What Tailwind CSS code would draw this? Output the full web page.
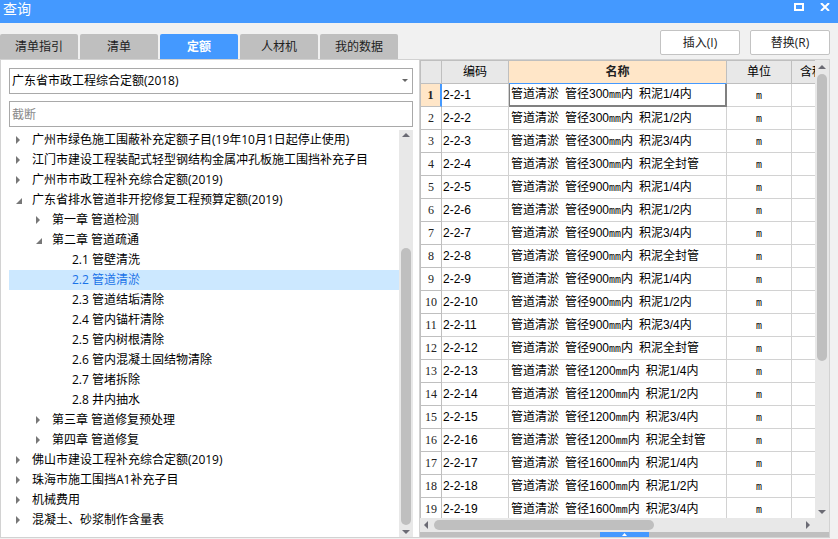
<!DOCTYPE html>
<html lang="zh-CN">
  <head>
    <meta charset="UTF-8" />
    <meta name="viewport" content="width=device-width, initial-scale=1.0" />
    <script src="https://cdn.jsdelivr.net/npm/@tailwindcss/browser@4"></script>
    <title>查询</title>
  </head>
  <body class="bg-[#f1f1f1] font-['Open_Sans','Noto_Sans_CJK_SC',sans-serif] text-xs text-black">
    <div class="flex h-screen flex-col overflow-hidden">
      <!-- Title bar -->
      <header class="flex h-[23px] shrink-0 items-start justify-between bg-[#4499ff] pl-[3px] pr-2 text-white">
        <h1 class="text-sm leading-[18px]">查询</h1>
        <div class="flex gap-4 pt-[3px]">
          <button aria-label="最大化">
            <svg class="h-2 w-2.5" viewBox="0 0 10 8"><path d="M1 1h8v6H1z" fill="none" stroke="#fff" stroke-width="2" /></svg>
          </button>
          <button aria-label="关闭">
            <svg class="h-2 w-2.5" viewBox="0 0 10 8"><path d="M1 0l8 8M9 0L1 8" fill="none" stroke="#fff" stroke-width="2" /></svg>
          </button>
        </div>
      </header>

      <!-- Tabs and actions -->
      <div class="flex h-9 shrink-0 items-end justify-between pr-2">
        <nav class="flex gap-0.5 text-[#222]">
          <button class="h-[25px] w-[78px] rounded-t-xs bg-[#bfbfbf]">清单指引</button>
          <button class="h-[25px] w-[78px] rounded-t-xs bg-[#bfbfbf]">清单</button>
          <button class="h-[25px] w-[78px] rounded-t-xs bg-[#4499ff] font-bold text-white">定额</button>
          <button class="h-[25px] w-[78px] rounded-t-xs bg-[#bfbfbf]">人材机</button>
          <button class="h-[25px] w-[78px] rounded-t-xs bg-[#bfbfbf]">我的数据</button>
        </nav>
        <div class="flex gap-2.5 pb-1 text-[#222]">
          <button class="h-[25px] w-20 rounded-xs border border-[#c3c3c3] bg-white">插入(I)</button>
          <button class="h-[25px] w-20 rounded-xs border border-[#c3c3c3] bg-white">替换(R)</button>
        </div>
      </div>

      <main class="mr-2 mb-px flex min-h-0 flex-1 border border-[#d2d2d2] bg-white">
        <!-- Quota library tree -->
        <section class="flex w-[419px] shrink-0 flex-col gap-[7px] border-r border-[#d2d2d2] pt-2 pr-[6px] pl-2">
          <div class="relative shrink-0">
            <select aria-label="定额库" class="block h-[26px] w-full appearance-none border border-[#a9a9a9] bg-white px-0.5">
              <option>广东省市政工程综合定额(2018)</option>
            </select>
            <svg class="pointer-events-none absolute top-[11px] right-[5px] h-[3px] w-[6px]" viewBox="0 0 6 3"><path d="M0 0h6L3 3z" fill="#666" /></svg>
          </div>
          <input type="text" aria-label="搜索" placeholder="截断" class="block h-[26px] w-full shrink-0 border border-[#a9a9a9] px-0.5 placeholder:text-[#888]" />
          <div class="-mt-1 flex min-h-0 flex-1">
            <ul id="tree" role="tree" class="min-w-0 flex-1 overflow-hidden"></ul>
            <div class="flex w-3.5 shrink-0 flex-col items-center bg-[#e8e8e8] py-[3px]">
              <svg class="h-1 w-2 shrink-0" viewBox="0 0 8 4"><path d="M0 4h8L4 0z" fill="#6b6b74" /></svg>
              <div class="mt-[111px] h-[277px] w-2.5 rounded-full bg-[#bfbfbf]"></div>
              <svg class="mt-auto h-1 w-2 shrink-0" viewBox="0 0 8 4"><path d="M0 0h8L4 4z" fill="#6b6b74" /></svg>
            </div>
          </div>
        </section>

        <!-- Quota items -->
        <section class="flex min-w-0 flex-1 flex-col">
          <div class="flex min-h-0 flex-1">
            <div class="min-w-0 flex-1 overflow-hidden border-t border-l border-[#bfbfbf]">
              <table class="w-[436px] table-fixed border-separate border-spacing-0 font-['Liberation_Sans','Noto_Sans_CJK_SC',sans-serif]">
                <colgroup>
                  <col class="w-[21px]" />
                  <col class="w-[67px]" />
                  <col class="w-[218px]" />
                  <col class="w-[65px]" />
                  <col class="w-[65px]" />
                </colgroup>
                <thead>
                  <tr class="h-[23px] bg-[#e8e8e8]">
                    <th class="border-r border-b border-[#bfbfbf]"></th>
                    <th class="border-r border-b border-[#bfbfbf] font-normal">编码</th>
                    <th class="border-r border-b border-r-[#bfbfbf] border-b-[#4499ff] bg-[#ffe6c8] text-[#222]">名称</th>
                    <th class="border-r border-b border-[#bfbfbf] font-normal">单位</th>
                    <th class="border-r border-b border-[#bfbfbf] pl-2 text-left font-normal">含税价</th>
                  </tr>
                </thead>
                <tbody id="rows"></tbody>
              </table>
            </div>
            <div class="flex w-3.5 shrink-0 flex-col items-center bg-[#e8e8e8] pt-[5px] pb-1">
              <svg class="h-1 w-2 shrink-0" viewBox="0 0 8 4"><path d="M0 4h8L4 0z" fill="#6b6b74" /></svg>
              <div class="mt-[5px] h-[287px] w-2.5 rounded-full bg-[#bfbfbf]"></div>
              <svg class="mt-auto h-1 w-2 shrink-0" viewBox="0 0 8 4"><path d="M0 0h8L4 4z" fill="#6b6b74" /></svg>
            </div>
          </div>
          <div class="flex h-3.5 shrink-0 items-center bg-[#e8e8e8] pr-[19px] pl-1">
            <svg class="h-2 w-1 shrink-0" viewBox="0 0 4 8"><path d="M4 0v8L0 4z" fill="#6b6b74" /></svg>
            <div class="ml-1.5 h-2.5 w-[220px] rounded-full bg-[#bfbfbf]"></div>
            <svg class="ml-auto h-2 w-1 shrink-0" viewBox="0 0 4 8"><path d="M0 0v8l4-4z" fill="#6b6b74" /></svg>
          </div>
          <div class="flex h-[5px] shrink-0 justify-center bg-[#bfbfbf]">
            <button aria-label="展开" class="flex w-[49px] items-center justify-center bg-[#4499ff]">
              <svg class="h-[3px] w-[5px]" viewBox="0 0 5 3"><path d="M0 3h5L2.500 0z" fill="#fff" /></svg>
            </button>
          </div>
        </section>
      </main>
    </div>
  </body>
  <script>
    const tree = document.getElementById("tree");
    const rows = document.getElementById("rows");

    // [level, state, label]
    const nodes = [
      [1, "closed", "广州市绿色施工围蔽补充定额子目(19年10月1日起停止使用)"],
      [1, "closed", "江门市建设工程装配式轻型钢结构金属冲孔板施工围挡补充子目"],
      [1, "closed", "广州市市政工程补充综合定额(2019)"],
      [1, "open", "广东省排水管道非开挖修复工程预算定额(2019)"],
      [2, "closed", "第一章 管道检测"],
      [2, "open", "第二章 管道疏通"],
      [3, "leaf", "2.1 管壁清洗"],
      [3, "leaf", "2.2 管道清淤"],
      [3, "leaf", "2.3 管道结垢清除"],
      [3, "leaf", "2.4 管内锚杆清除"],
      [3, "leaf", "2.5 管内树根清除"],
      [3, "leaf", "2.6 管内混凝土固结物清除"],
      [3, "leaf", "2.7 管堵拆除"],
      [3, "leaf", "2.8 井内抽水"],
      [2, "closed", "第三章 管道修复预处理"],
      [2, "closed", "第四章 管道修复"],
      [1, "closed", "佛山市建设工程补充综合定额(2019)"],
      [1, "closed", "珠海市施工围挡A1补充子目"],
      [1, "closed", "机械费用"],
      [1, "closed", "混凝土、砂浆制作含量表"],
    ];
    const indent = { 1: "pl-[7px]", 2: "pl-[27px]", 3: "pl-[47px]" };
    const arrows = {
      closed: '<path d="M0 0v8l4-4z" fill="#777" />',
      open: '<path d="M6 2v6H0z" fill="#777" />',
      leaf: "",
    };

    nodes.forEach(([level, state, label]) => {
      const color = label === "2.2 管道清淤" ? "bg-[#cce8ff] text-[#1a73e8]" : "";
      tree.innerHTML += `
        <li role="treeitem" class="flex h-5 items-center whitespace-nowrap ${indent[level]} ${color}">
          <svg class="mr-2 h-2 w-2 shrink-0" viewBox="0 0 8 8">${arrows[state]}</svg>
          <span>${label}</span>
        </li>`;
    });

    // Every diameter comes in four silt depths
    const diameters = [300, 900, 900, 1200, 1600];
    const depths = ["1/4内", "1/2内", "3/4内", "全封管"];

    for (let i = 0; i < 19; i++) {
      const mm = `<span class="font-['Liberation_Mono',monospace] text-[10px]">mm</span>`;
      const name = `管道清淤&ensp;管径${diameters[Math.floor(i / 4)]}${mm}内&ensp;积泥${depths[i % 4]}`;
      const first = i === 0;
      const num = first
        ? "border-r-2 border-r-[#4499ff] bg-[#ffe6c8] font-bold"
        : "border-r border-r-[#bfbfbf]";
      const cell = first
        ? "border-r-2 border-b-2 border-l border-[#808080] pl-px"
        : "border-r border-b border-[#d2d2d2] pl-0.5";
      rows.innerHTML += `
        <tr class="h-[23px]">
          <td class="border-b border-b-[#bfbfbf] py-0 px-0 text-center font-['Liberation_Serif',serif] text-[#222] ${num}">${i + 1}</td>
          <td class="border-r border-b border-[#d2d2d2] py-0 pr-0 pl-px">${"2-2-" + (i + 1)}</td>
          <td class="overflow-hidden py-0 pr-0 whitespace-nowrap ${cell}">${name}</td>
          <td class="border-r border-b border-[#d2d2d2] p-0 text-center">${mm.replace(">mm<", ">m<")}</td>
          <td class="border-r border-b border-[#d2d2d2] p-0"></td>
        </tr>`;
    }
  </script>
</html>
